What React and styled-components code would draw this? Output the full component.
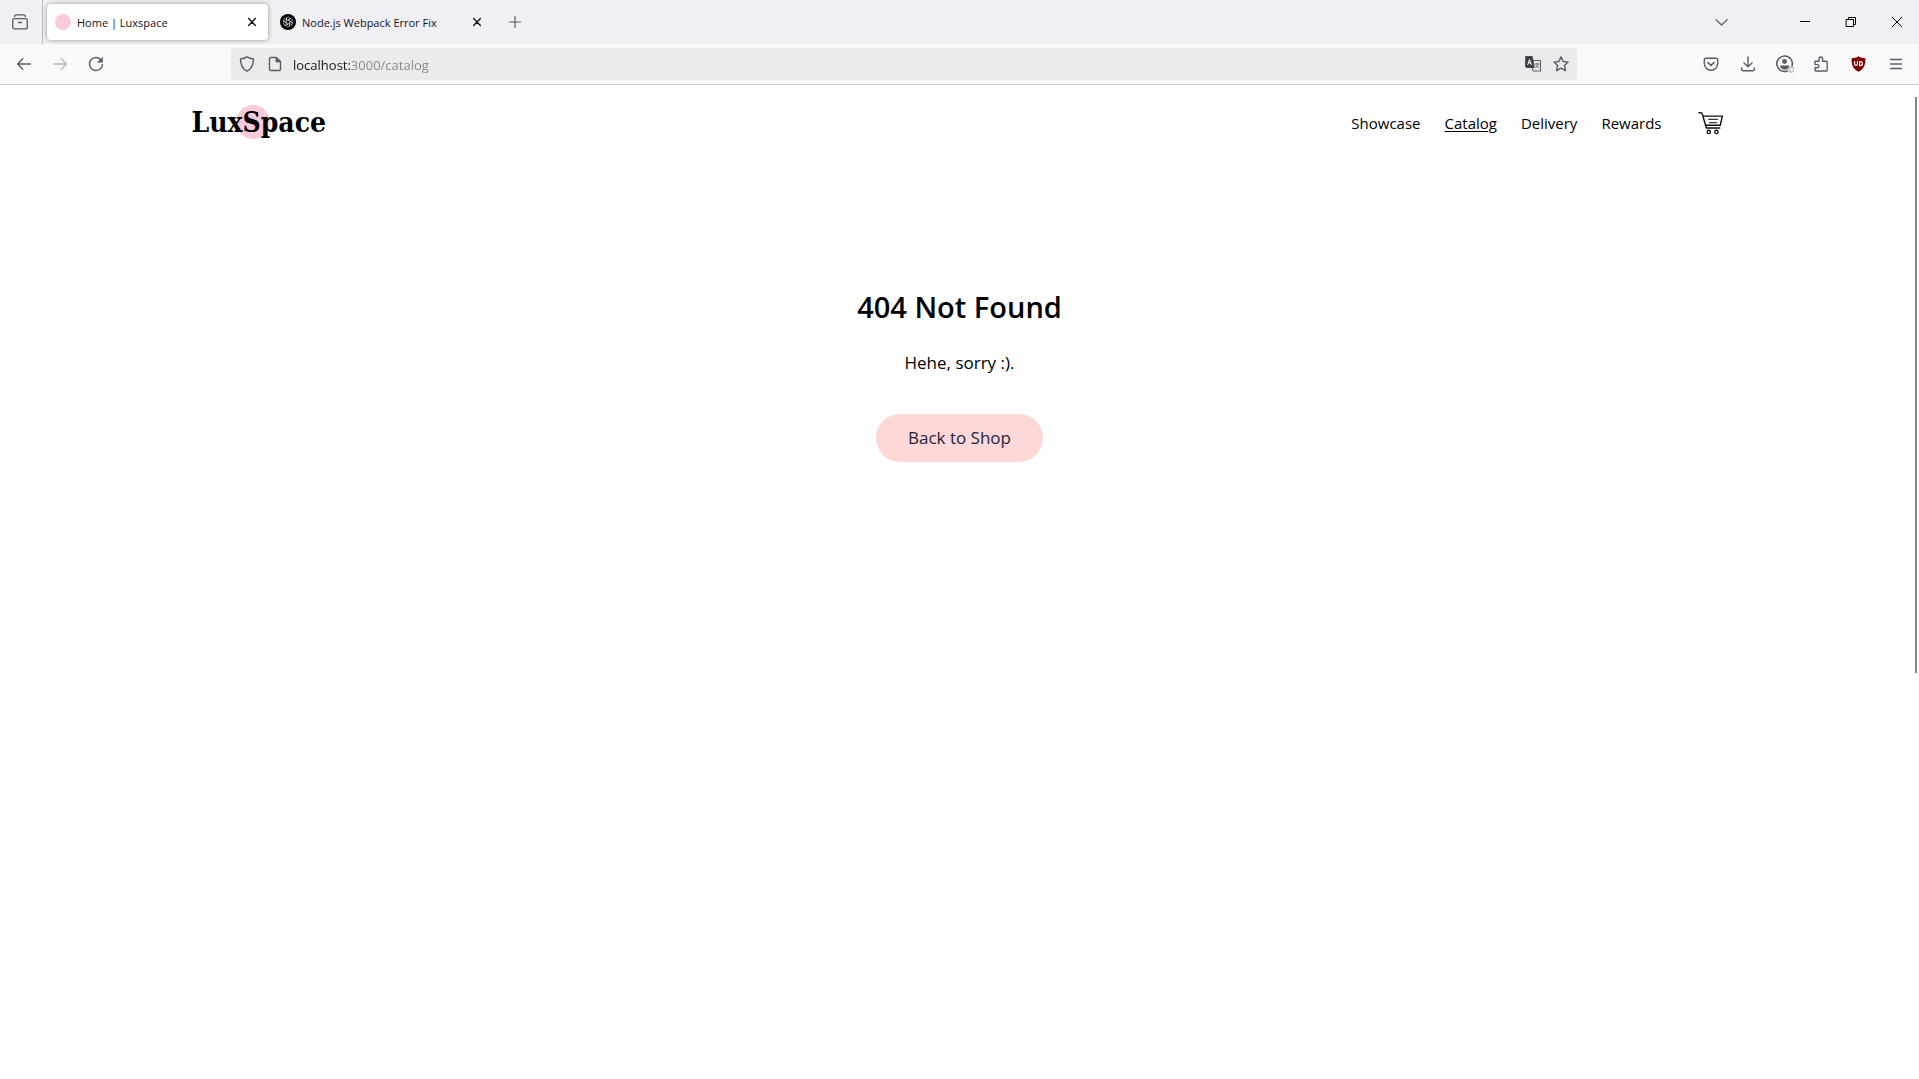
import React from "react";
import styled, { createGlobalStyle, css } from "styled-components";

const GlobalStyle = createGlobalStyle`
  * { box-sizing: border-box; }
  body {
    margin: 0;
    background: #fff;
    color: #000;
    font-family: "Open Sans", "Noto Sans", sans-serif;
    overflow: hidden;
  }
  button, input { font: inherit; border: 0; padding: 0; background: none; color: inherit; }
  a { color: inherit; text-decoration: none; }
  svg { display: block; flex: none; }
`;

const Window = styled.div`
  display: flex;
  flex-direction: column;
  min-height: 100vh;
`;

/* Browser chrome */
const TabStrip = styled.div`
  display: flex;
  align-items: center;
  height: 44px;
  background: #f0eff4;
  color: #15141a;
  font-size: 11px;
`;

const ViewCell = styled.div`
  display: flex;
  align-items: center;
  height: 44px;
  padding-left: 8px;
  width: 43px;
  margin-right: 4px;
  border-right: 1px solid #b9b8c0;
`;

const IconButton = styled.button`
  display: grid;
  place-items: center;
  flex: none;
  width: ${(p) => p.$w || 24}px;
  height: 32px;
  color: ${(p) => p.$color || "#5b5b66"};
  opacity: ${(p) => (p.disabled ? 0.4 : 1)};
`;

const Tab = styled.div`
  display: flex;
  align-items: center;
  width: 221px;
  height: 36px;
  padding: 0 4px 0 8px;
  margin-right: 4px;
  border-radius: 4px;
  ${(p) =>
    p.$active &&
    css`
      background: #fff;
      box-shadow: 0 0 4px rgba(0, 0, 0, 0.4);
    `}
`;

const TabLabel = styled.span`
  flex: 1;
  margin-left: 6px;
  padding-top: 2px;
  line-height: 16px;
  white-space: nowrap;
`;

const Dot = styled.span`
  width: 16px;
  height: 16px;
  border-radius: 50%;
  background: #f9cadb;
`;

const WindowControls = styled.div`
  display: flex;
  margin-left: auto;
`;

const Toolbar = styled.div`
  display: flex;
  align-items: center;
  height: 41px;
  background: #f9f9fb;
  border-bottom: 1px solid #cccccf;
`;

const NavButtons = styled.div`
  display: flex;
  gap: 12px;
  width: 231px;
  flex: none;
  padding-left: 12px;
`;

const AddressBar = styled.form`
  display: flex;
  align-items: center;
  flex: 1;
  height: 32px;
  padding: 0 4px;
  border-radius: 4px;
  background: #ebebed;
  gap: 4px;
`;

const AddressInput = styled.input`
  flex: 1;
  min-width: 0;
  height: 24px;
  margin-left: 2px;
  padding-top: 2px;
  font-size: 13px;
  outline: 0;
  color: transparent;
  background: linear-gradient(to right, #15141a 57px, #85858a 57px);
  background-clip: text;
  -webkit-background-clip: text;
`;

const ToolbarActions = styled.div`
  display: flex;
  justify-content: flex-end;
  gap: 13px;
  width: 342px;
  flex: none;
  padding-right: 11px;
`;

/* Shop page */
const Page = styled.div`
  position: relative;
  flex: 1;
`;

const ScrollThumb = styled.div`
  position: absolute;
  top: 12px;
  right: 2px;
  width: 2px;
  height: 576px;
  background: #858585;
`;

const Container = styled.header`
  display: flex;
  align-items: center;
  justify-content: space-between;
  max-width: 1536px;
  margin: 0 auto;
  padding: 18px 0 16px;
`;

const Logo = styled.a`
  position: relative;
  z-index: 0;
  font-family: "DejaVu Serif Condensed", "DejaVu Serif", serif;
  font-weight: 700;
  font-size: 28px;
  line-height: 40px;
`;

const LogoDot = styled.span`
  position: absolute;
  z-index: -1;
  top: 2px;
  left: 44px;
  width: 34px;
  height: 34px;
  border-radius: 50%;
  background: #f9cadb;
`;

const Menu = styled.nav`
  display: flex;
  align-items: center;
  gap: 24px;
  font-size: 15px;
  line-height: 24px;
`;

const MenuLink = styled.a`
  text-decoration: ${(p) => (p.$current ? "underline" : "none")};
  text-underline-offset: 2px;
`;

const CartLink = styled.a`
  padding: 0 4px 0 12px;
`;

const Main = styled.main`
  display: flex;
  flex-direction: column;
  align-items: center;
  padding-top: 130px;
  text-align: center;
`;

const Title = styled.h1`
  margin: 0 0 24px;
  font-size: 29px;
  font-weight: 600;
  line-height: 36px;
`;

const Message = styled.p`
  margin: 0 0 37px;
  font-size: 17px;
  line-height: 28px;
`;

const ShopLink = styled.a`
  padding: 10px 32px;
  border-radius: 24px;
  background: #fed7d7;
  color: #1f2440;
  font-size: 17px;
  line-height: 28px;
`;

const Icon = ({ size = 16, children, w = 1.4 }) => (
  <svg
    width={size}
    height={size}
    viewBox="0 0 16 16"
    fill="none"
    stroke="currentColor"
    strokeWidth={w}
    strokeLinecap="round"
    strokeLinejoin="round"
    aria-hidden="true"
  >
    {children}
  </svg>
);

const CloseIcon = () => (
  <Icon w={1.4}>
    <path d="M4.600 4.600l6.800 6.800M11.400 4.600l-6.800 6.800" />
  </Icon>
);

const KnotIcon = () => (
  <svg width="16" height="16" viewBox="0 0 16 16" fill="none" stroke="#fff" strokeWidth="0.6" aria-hidden="true">
    <circle cx="8" cy="8" r="8" fill="#000" stroke="none" />
    {[0, 60, 120, 180, 240, 300].map((a) => (
      <path key={a} transform={`rotate(${a} 8 8)`} d="M6.200 9V5.200a2.100 2.100 0 0 1 3.400-1.600M8 6l3.200-1.900" />
    ))}
  </svg>
);

const CartIcon = () => (
  <svg width="26" height="26" viewBox="0 0 28 26" fill="none" stroke="#111" aria-hidden="true">
    <path d="M1 2h2.200q1 0 1.400 1.200L9 18.400h14.500" strokeWidth="1.500" strokeLinecap="round" />
    <path d="M5.200 5.600h21l-2.200 9.800H8.200" strokeWidth="1.500" strokeLinejoin="round" />
    <path d="M11 9h10.500M12 12.600h8.500" stroke="#333" strokeWidth="1.300" />
    <circle cx="11.600" cy="22.600" r="1.800" strokeWidth="1.400" />
    <circle cx="19.800" cy="22.600" r="1.800" strokeWidth="1.400" />
  </svg>
);

export default function App() {
  return (
    <Window>
      <GlobalStyle />
      <TabStrip>
        <ViewCell>
          <IconButton aria-label="View recent browsing">
            <Icon w={1.3}>
              <path d="M2.600 2.600Q2.800.9 4.400.9h7.200q1.600 0 1.800 1.700M2.600 4.600h10.800a1.900 1.900 0 0 1 1.900 1.900v6.400a2 2 0 0 1-2 2H2.700a2 2 0 0 1-2-2V6.500a1.900 1.900 0 0 1 1.900-1.900zM6.500 8.500h3" />
            </Icon>
          </IconButton>
        </ViewCell>
        <Tab $active>
          <Dot />
          <TabLabel>Home | Luxspace</TabLabel>
          <IconButton $color="#15141a" aria-label="Close Home tab"><CloseIcon /></IconButton>
        </Tab>
        <Tab>
          <KnotIcon />
          <TabLabel>Node.js Webpack Error Fix</TabLabel>
          <IconButton $color="#15141a" aria-label="Close Node.js tab"><CloseIcon /></IconButton>
        </Tab>
        <IconButton $w={36} aria-label="New tab">
          <Icon w={1.2}><path d="M8 2.500v11M2.500 8h11" /></Icon>
        </IconButton>
        <WindowControls>
          <IconButton $w={120} aria-label="List all tabs">
            <Icon w={1.3}><path d="M3 5.600L8.600 11l5.600-5.400" /></Icon>
          </IconButton>
          <IconButton $w={46} $color="#000" aria-label="Minimize">
            <Icon w={1}><path d="M4 7.500h10" strokeLinecap="butt" /></Icon>
          </IconButton>
          <IconButton $w={46} $color="#000" aria-label="Restore">
            <Icon w={1}><path d="M4.500 5.500h7v7h-7zM6.500 5.500v-2h7v7h-2" /></Icon>
          </IconButton>
          <IconButton $w={46} $color="#000" aria-label="Close window">
            <Icon w={1}><path d="M4.200 3.200l9.600 9.600M13.800 3.200l-9.600 9.600" /></Icon>
          </IconButton>
        </WindowControls>
      </TabStrip>

      <Toolbar>
        <NavButtons>
          <IconButton aria-label="Back"><Icon><path d="M14.500 8H1.800M6.800 2.800L1.600 8l5.200 5.200" /></Icon></IconButton>
          <IconButton disabled aria-label="Forward"><Icon><path d="M1.500 8h12.700M9.200 2.800L14.400 8l-5.200 5.200" /></Icon></IconButton>
          <IconButton aria-label="Reload">
            <Icon>
              <path d="M13.300 4.200A6.500 6.500 0 1 0 14.500 8.500" />
              <path d="M14.500 1.500v4.800H9.700z" fill="currentColor" strokeWidth="0.6" />
            </Icon>
          </IconButton>
        </NavButtons>
        <AddressBar onSubmit={(e) => e.preventDefault()}>
          <IconButton type="button" aria-label="Tracking protection">
            <Icon><path d="M8 .9c2 1.300 4.200 1.900 6.500 2.100 0 5.200-1.300 9.600-6.500 12.200C2.800 12.600 1.500 8.200 1.500 3 3.800 2.800 6 2.200 8 .9z" /></Icon>
          </IconButton>
          <IconButton type="button" aria-label="Site information">
            <Icon>
              <path d="M4 1.500h5.500l4 4V13a1.500 1.500 0 0 1-1.500 1.500H4A1.500 1.500 0 0 1 2.500 13V3A1.500 1.500 0 0 1 4 1.500z" />
              <path d="M9 1.500V6h4.500z" fill="currentColor" strokeWidth="0.8" />
            </Icon>
          </IconButton>
          <AddressInput aria-label="Address" defaultValue="localhost:3000/catalog" />
          <IconButton type="button" aria-label="Translate page">
            <Icon>
              <path d="M8.500 4.500H15a.5.500 0 0 1 .5.500v9.500a.5.500 0 0 1-.5.500H8.500l-1.500-3" strokeWidth="1.100" />
              <path d="M10 8h4M12 7v1M13.300 8.200c-.3 1.800-1.500 3-3 3.700M11 9.500c.6 1.100 1.500 1.900 2.700 2.400" strokeWidth="0.8" />
              <path d="M.5.500h6.800l2 11H1.500a1 1 0 0 1-1-1z" fill="#3d3d46" stroke="#3d3d46" strokeWidth="0.8" />
              <path d="M2.800 8.500l1.700-5 1.800 5M3.400 6.900h2.300" stroke="#fff" strokeWidth="1" />
            </Icon>
          </IconButton>
          <IconButton type="button" aria-label="Bookmark this page">
            <Icon><path d="M8 .9l2.100 4.600 5 .6-3.700 3.400 1 5.100L8 12.100l-4.400 2.500 1-5.100L.9 6.100l5-.6z" /></Icon>
          </IconButton>
        </AddressBar>
        <ToolbarActions>
          <IconButton aria-label="Save to Pocket">
            <Icon>
              <path d="M2.800 2.200h10.400a1.500 1.500 0 0 1 1.500 1.500V7.500a6.700 6.700 0 0 1-13.400 0V3.700a1.500 1.500 0 0 1 1.500-1.500z" />
              <path d="M4.900 6.500L8 9.400l3.100-2.900" strokeWidth="1.600" />
            </Icon>
          </IconButton>
          <IconButton aria-label="Downloads">
            <Icon><path d="M8 1v9.500M4 7l4 3.800L12 7M1.700 12v1.200a1.500 1.500 0 0 0 1.500 1.500h9.600a1.500 1.500 0 0 0 1.500-1.500V12" /></Icon>
          </IconButton>
          <IconButton aria-label="Account">
            <Icon size={18}>
              <path d="M10 14.200A6.900 6.900 0 1 1 14.300 9.500" />
              <circle cx="7.600" cy="5.700" r="2.200" fill="currentColor" stroke="none" />
              <path d="M3.600 9.300h8.200c0 2-1.800 3.700-4.100 3.700s-4.100-1.700-4.100-3.700z" fill="currentColor" stroke="none" />
              <circle cx="13.600" cy="13" r="2.200" stroke="#b0b0b8" strokeWidth="1" />
            </Icon>
          </IconButton>
          <IconButton aria-label="Extensions">
            <Icon><path d="M1 5.200h4V2.800a1.800 1.800 0 0 1 3.600 0v2.400H12a1.200 1.200 0 0 1 1.200 1.200v7.400A1.200 1.200 0 0 1 12 15H2.200A1.200 1.200 0 0 1 1 13.800v-2h2.300a1.600 1.600 0 0 0 0-3.200H1z" /></Icon>
          </IconButton>
          <IconButton aria-label="uBlock">
            <Icon>
              <path d="M7.500 .2c2 1.500 4.300 1.900 6.900 2 0 6-.5 10-6.900 13.600C1.100 12.200.6 8.200.6 2.200 3.200 2.100 5.500 1.700 7.500 .2z" fill="#800000" stroke="none" />
              <path d="M3.600 5.600v2.500a1.400 1.400 0 0 0 2.800 0V5.600M8.600 5.600v4h.9a2 2 0 0 0 0-4z" stroke="#fff" strokeWidth="1.200" />
            </Icon>
          </IconButton>
          <IconButton aria-label="Application menu">
            <Icon w={1.300}><path d="M2.500 3.500h11M2.500 8h11M2.500 12.500h11" /></Icon>
          </IconButton>
        </ToolbarActions>
      </Toolbar>

      <Page>
        <Container>
          <Logo href="#home"><LogoDot />LuxSpace</Logo>
          <Menu aria-label="Main">
            <MenuLink href="#showcase">Showcase</MenuLink>
            <MenuLink href="#catalog" $current aria-current="page">Catalog</MenuLink>
            <MenuLink href="#delivery">Delivery</MenuLink>
            <MenuLink href="#rewards">Rewards</MenuLink>
            <CartLink href="#cart" aria-label="Cart"><CartIcon /></CartLink>
          </Menu>
        </Container>
        <Main>
          <Title>404 Not Found</Title>
          <Message>Hehe, sorry :).</Message>
          <ShopLink href="#shop">Back to Shop</ShopLink>
        </Main>
        <ScrollThumb />
      </Page>
    </Window>
  );
}
